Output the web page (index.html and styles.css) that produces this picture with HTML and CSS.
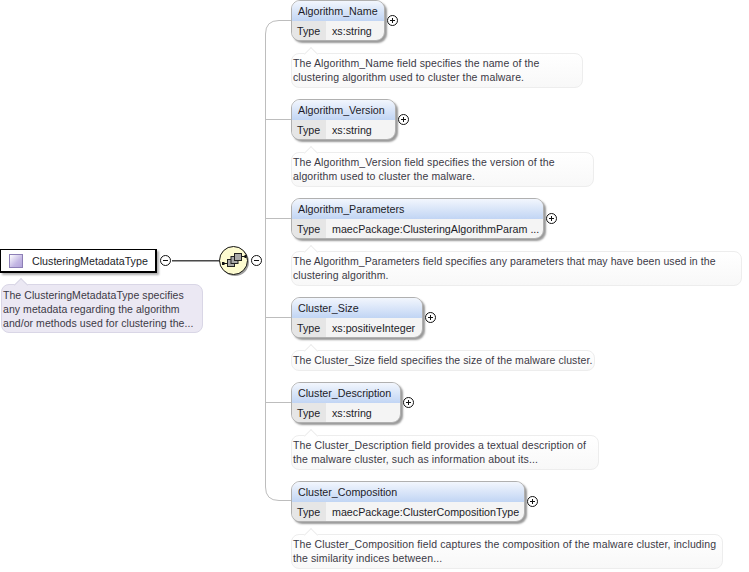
FILE: index.html
```html
<!DOCTYPE html>
<html lang="en">
<head>
<meta charset="utf-8">
<title>ClusteringMetadataType</title>
<link rel="stylesheet" href="styles.css">
</head>
<body>
<div class="diagram">
  <svg class="wires" width="749" height="572" viewBox="0 0 749 572" aria-hidden="true">
    <path class="wire" d="M291 20.500H279Q265.500 20.500 265.500 34V487Q265.500 500.500 279 500.500H291M265.500 119.500H291M265.500 218.500H291M265.500 317.500H291M265.500 402.500H291"/>
    <path class="main-shadow" d="M172 261.500H222"/>
    <path class="main" d="M172 260.500H222"/>
  </svg>

  <section class="root">
    <div class="root-box">
      <span class="root-icon"></span>
      <span class="root-name">ClusteringMetadataType</span>
    </div>
    <svg class="toggle root-toggle" width="13" height="13" viewBox="0 0 13 13"><circle cx="6.500" cy="6.500" r="5" /><path d="M4 6.500H9"/></svg>
    <p class="note root-note">The ClusteringMetadataType specifies<br>any metadata regarding the algorithm<br>and/or methods used for clustering the...</p>
  </section>

  <svg class="sequence" width="32" height="32" viewBox="0 0 32 32" aria-hidden="true">
    <circle class="seq-shadow" cx="16" cy="16" r="14"/>
    <circle class="seq-disc" cx="14.500" cy="14.500" r="14"/>
    <path class="seq-line" d="M5 17.500H8.500M22.500 10.500H26"/>
    <rect class="seq-node" x="8.500" y="13.500" width="7" height="7"/>
    <rect class="seq-node" x="12" y="10.500" width="7" height="7"/>
    <rect class="seq-node" x="15.500" y="7.500" width="7" height="7"/>
    <rect class="seq-dot" x="3" y="16" width="2.500" height="3"/>
    <rect class="seq-dot" x="25.500" y="9" width="2" height="3"/>
  </svg>
  <svg class="toggle seq-toggle" width="13" height="13" viewBox="0 0 13 13"><circle cx="6.500" cy="6.500" r="5" /><path d="M4 6.500H9"/></svg>

  <main class="fields">
    <article class="field">
      <div class="field-head">
        <div class="box w1">
          <div class="box-name">Algorithm_Name</div>
          <div class="box-row"><span class="box-key">Type</span><span class="box-val">xs:string</span></div>
        </div>
        <svg class="toggle" width="13" height="13" viewBox="0 0 13 13"><circle cx="6.500" cy="6.500" r="5" /><path d="M4 6.500H9M6.500 4V9"/></svg>
      </div>
      <p class="note n1">The Algorithm_Name field specifies the name of the<br>clustering algorithm used to cluster the malware.</p>
    </article>
    <article class="field">
      <div class="field-head">
        <div class="box w2">
          <div class="box-name">Algorithm_Version</div>
          <div class="box-row"><span class="box-key">Type</span><span class="box-val">xs:string</span></div>
        </div>
        <svg class="toggle" width="13" height="13" viewBox="0 0 13 13"><circle cx="6.500" cy="6.500" r="5" /><path d="M4 6.500H9M6.500 4V9"/></svg>
      </div>
      <p class="note n2">The Algorithm_Version field specifies the version of the<br>algorithm used to cluster the malware.</p>
    </article>
    <article class="field">
      <div class="field-head">
        <div class="box w3">
          <div class="box-name">Algorithm_Parameters</div>
          <div class="box-row"><span class="box-key">Type</span><span class="box-val">maecPackage:ClusteringAlgorithmParam ...</span></div>
        </div>
        <svg class="toggle" width="13" height="13" viewBox="0 0 13 13"><circle cx="6.500" cy="6.500" r="5" /><path d="M4 6.500H9M6.500 4V9"/></svg>
      </div>
      <p class="note n3">The Algorithm_Parameters field specifies any parameters that may have been used in the<br>clustering algorithm.</p>
    </article>
    <article class="field">
      <div class="field-head">
        <div class="box w4">
          <div class="box-name">Cluster_Size</div>
          <div class="box-row"><span class="box-key">Type</span><span class="box-val">xs:positiveInteger</span></div>
        </div>
        <svg class="toggle" width="13" height="13" viewBox="0 0 13 13"><circle cx="6.500" cy="6.500" r="5" /><path d="M4 6.500H9M6.500 4V9"/></svg>
      </div>
      <p class="note n4">The Cluster_Size field specifies the size of the malware cluster.</p>
    </article>
    <article class="field">
      <div class="field-head">
        <div class="box w5">
          <div class="box-name">Cluster_Description</div>
          <div class="box-row"><span class="box-key">Type</span><span class="box-val">xs:string</span></div>
        </div>
        <svg class="toggle" width="13" height="13" viewBox="0 0 13 13"><circle cx="6.500" cy="6.500" r="5" /><path d="M4 6.500H9M6.500 4V9"/></svg>
      </div>
      <p class="note n5">The Cluster_Description field provides a textual description of<br>the malware cluster, such as information about its...</p>
    </article>
    <article class="field">
      <div class="field-head">
        <div class="box w6">
          <div class="box-name">Cluster_Composition</div>
          <div class="box-row"><span class="box-key">Type</span><span class="box-val">maecPackage:ClusterCompositionType</span></div>
        </div>
        <svg class="toggle" width="13" height="13" viewBox="0 0 13 13"><circle cx="6.500" cy="6.500" r="5" /><path d="M4 6.500H9M6.500 4V9"/></svg>
      </div>
      <p class="note n6">The Cluster_Composition field captures the composition of the malware cluster, including<br>the similarity indices between...</p>
    </article>
  </main>
</div>
</body>
</html>
```

FILE: styles.css
```css
html, body {
  margin: 0;
  padding: 0;
  background: #fff;
}
.diagram {
  position: relative;
  width: 749px;
  height: 572px;
  overflow: hidden;
  font-family: "Liberation Sans", Arial, sans-serif;
  font-size: 10.7px;
  color: #1c1c28;
}
.wires {
  position: absolute;
  left: 0;
  top: 0;
}
.wire {
  fill: none;
  stroke: #bdbdbd;
  stroke-width: 1;
}
.main {
  fill: none;
  stroke: #4a4a4a;
  stroke-width: 1;
}
.main-shadow {
  fill: none;
  stroke: #a0a0a0;
  stroke-width: 1;
}
.toggle {
  display: block;
  flex: none;
}
.toggle circle {
  fill: #fff;
  stroke: #111;
  stroke-width: 1;
}
.toggle path {
  fill: none;
  stroke: #111;
  stroke-width: 1;
}
.root {
  position: absolute;
  left: 0;
  top: 249px;
  width: 203px;
}
.root-box {
  box-sizing: border-box;
  display: flex;
  align-items: center;
  width: 157px;
  height: 24px;
  padding-left: 8px;
  background: #fff;
  border: 1px solid #000;
  border-right-width: 2px;
  border-bottom-width: 2px;
  box-shadow: 2px 2px 2px #b0b0b0;
}
.root-icon {
  box-sizing: border-box;
  flex: none;
  width: 14px;
  height: 14px;
  background: linear-gradient(135deg, #ffffff 0%, #c4b8e4 60%, #b3a4da 100%);
  border: 1px solid #8d7fb6;
}
.root-name {
  margin-left: 9px;
  white-space: nowrap;
}
.root-toggle {
  position: absolute;
  left: 159px;
  top: 5px;
}
.note {
  position: relative;
  box-sizing: border-box;
  margin: 0;
  padding: 2px 2px 0 1px;
  border: 1px solid #ededed;
  border-radius: 8px;
  background: linear-gradient(#ffffff, #f8f8f8);
  font-size: 10.5px;
  line-height: 14px;
  letter-spacing: 0.12px;
  color: #3b3945;
  white-space: nowrap;
}
.note::before {
  content: "";
  position: absolute;
  left: 14px;
  top: -5px;
  width: 9px;
  height: 9px;
  background: #fff;
  border-left: 1px solid #ededed;
  border-top: 1px solid #ededed;
  transform: rotate(45deg);
}
.root-note {
  margin: 11px 0 0 1px;
  padding-top: 3px;
  width: 202px;
  height: 49px;
  background: #ebe8f3;
  border-color: #d9d6e6;
  letter-spacing: 0.06px;
}
.root-note::before {
  background: #ebe8f3;
  border-color: #d9d6e6;
}
.sequence {
  position: absolute;
  left: 219px;
  top: 246px;
}
.seq-shadow {
  fill: #a0a0a0;
}
.seq-disc {
  fill: #fdfbd0;
  stroke: #111;
  stroke-width: 1;
}
.seq-line {
  fill: none;
  stroke: #111;
  stroke-width: 1;
}
.seq-node {
  fill: #a8a8a8;
  stroke: #222;
  stroke-width: 1;
}
.seq-dot {
  fill: #111;
}
.seq-toggle {
  position: absolute;
  left: 250px;
  top: 254px;
}
.fields {
  position: absolute;
  left: 291px;
  top: 0;
  display: flex;
  flex-direction: column;
  align-items: flex-start;
}
.field {
  display: flex;
  flex-direction: column;
  align-items: flex-start;
  margin-bottom: 11px;
}
.field-head {
  display: flex;
  align-items: center;
  gap: 1px;
}
.field-head .toggle {
  margin-top: -1px;
}
.box {
  box-sizing: border-box;
  height: 41px;
  border: 1px solid #b0b0b0;
  border-radius: 9px;
  overflow: hidden;
  background: #f4f4f4;
  box-shadow: 2px 2px 2px #999;
}
.box-name {
  box-sizing: border-box;
  height: 20px;
  padding-left: 6px;
  line-height: 20px;
  background: linear-gradient(#f2f6fd, #c1d5f4);
  white-space: nowrap;
}
.box-row {
  display: flex;
  height: 20px;
  line-height: 20px;
}
.box-key {
  box-sizing: border-box;
  width: 34px;
  padding-left: 5px;
  background: #e6e6e6;
}
.box-val {
  padding-left: 6px;
  white-space: nowrap;
}
.w1 { width: 94px; }
.w2 { width: 105px; }
.w3 { width: 253px; }
.w4 { width: 132px; }
.w5 { width: 110px; }
.w6 { width: 234px; }
.field .note {
  margin-top: 12px;
  height: 35px;
}
.field .n4 {
  height: 21px;
  letter-spacing: 0.09px;
}
.n1 { width: 292px; }
.n2 { width: 303px; }
.field .n3 { width: 451px; letter-spacing: 0.075px; }
.n4 { width: 304px; }
.n5 { width: 308px; }
.n6 { width: 432px; }
```
